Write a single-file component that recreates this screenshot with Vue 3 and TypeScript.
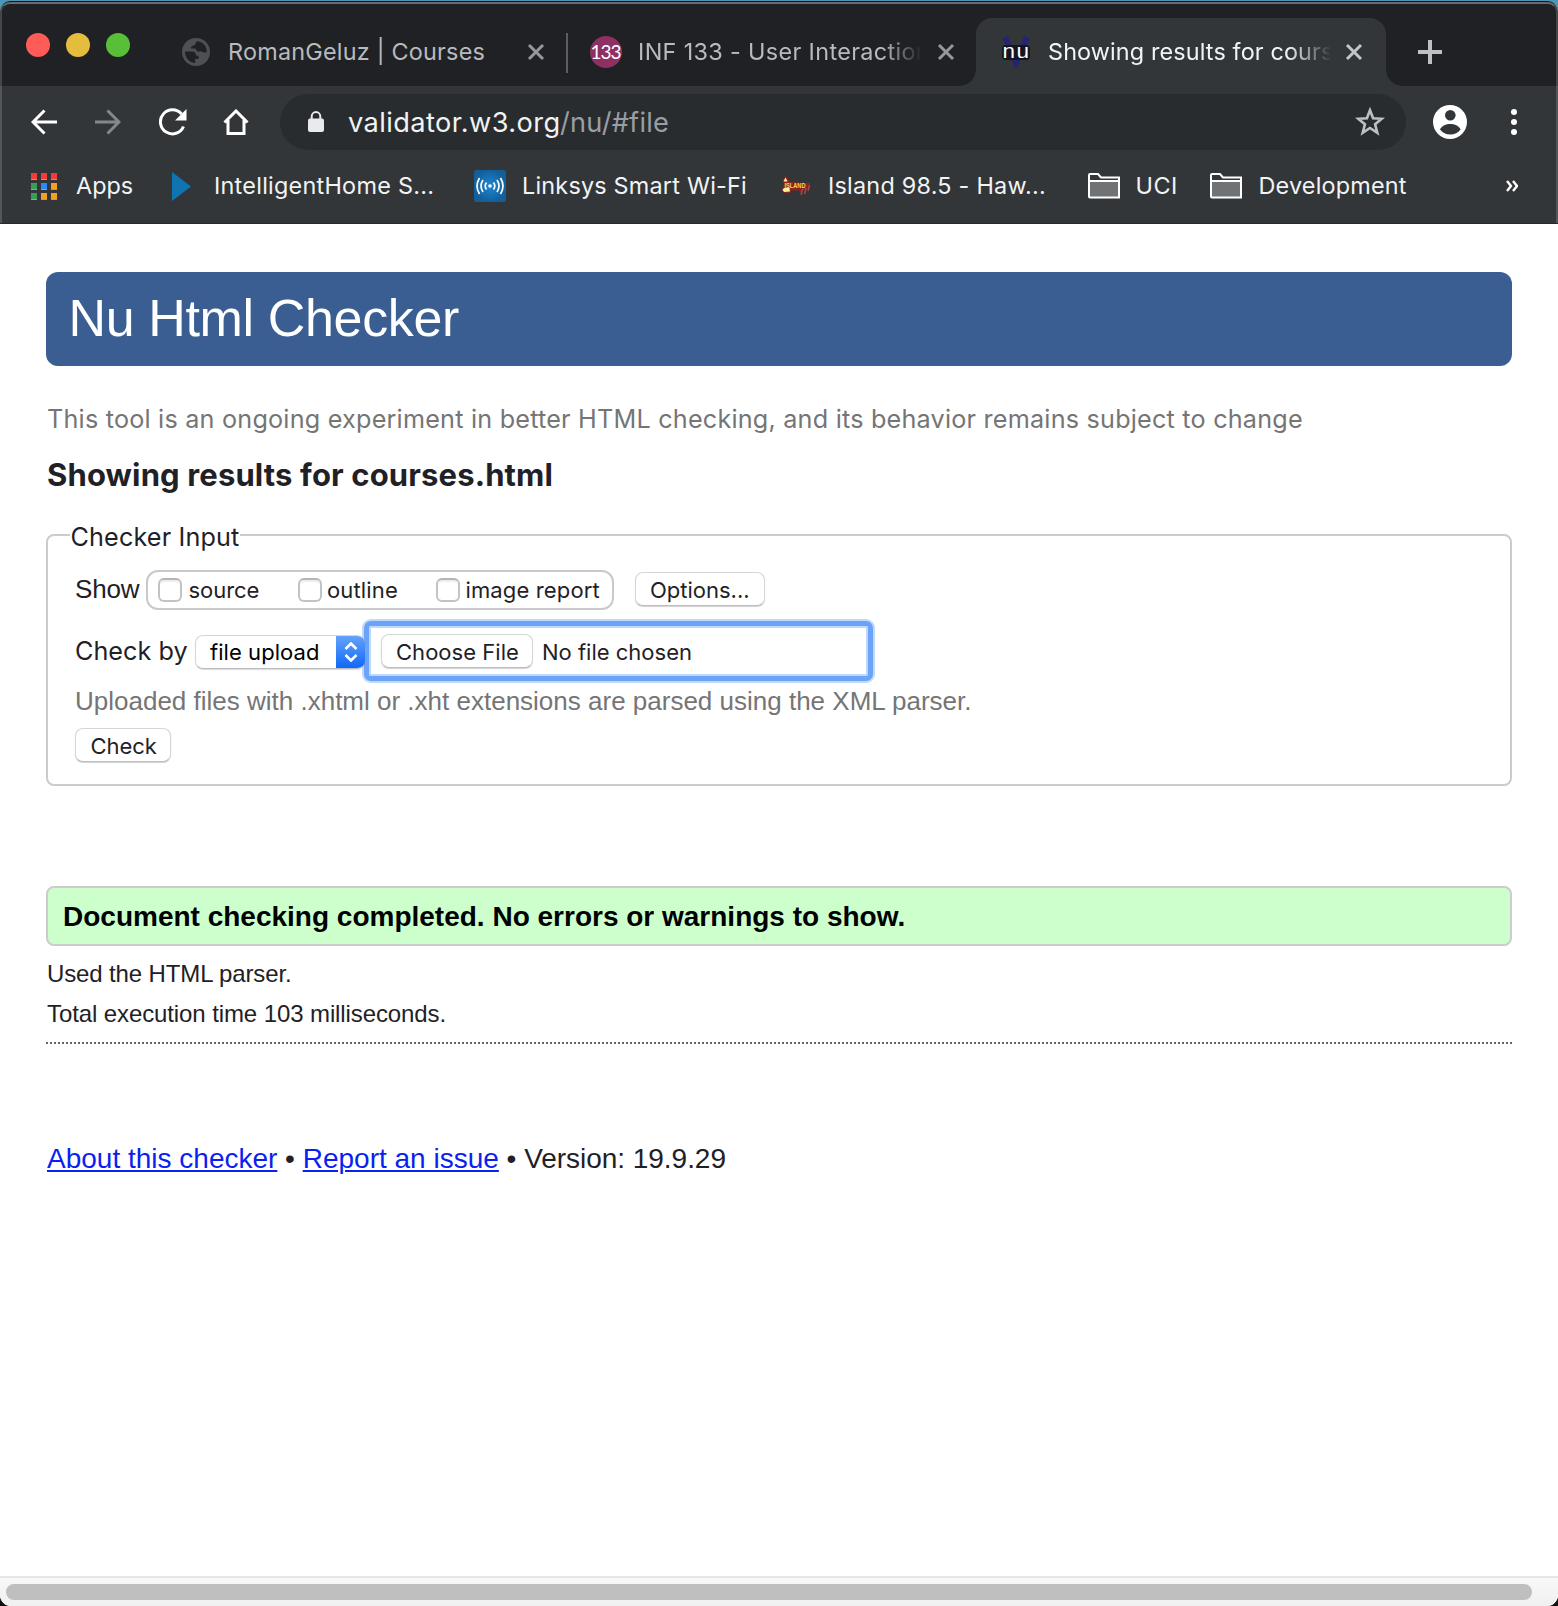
<script setup lang="ts">
import { ref } from 'vue'

interface Choice {
  id: string
  label: string
}

const choices: Choice[] = [
  { id: 'source', label: 'source' },
  { id: 'outline', label: 'outline' },
  { id: 'report', label: 'image report' },
]
const shown = ref<string[]>([])
const appColors: string[] = [
  '#f33b37', '#f33b37', '#f33b37',
  '#3a9d57', '#2a8bf2', '#f3a024',
  '#3a9d57', '#f3a024', '#f3a024',
]
</script>

<template>
  <div class="screen">
    <div class="window">
      <header class="chrome">
        <div class="tabs">
          <div class="lights"><i class="red"></i><i class="yellow"></i><i class="green"></i></div>
          <div class="tab first">
            <svg class="globe" viewBox="0 0 28 28">
              <circle cx="14" cy="14" r="14" fill="#4d5156" />
              <path fill="#202124" d="M3 13.6h6.6c3.200 0 4.400 1.200 4.400 3.400v.8h2.600v3.200h-3.400v4C7.500 25 3 20.400 3 13.600zM14.800 3.200C13.500 4.600 14 7 11.400 7.600c-1.800.5-2.600 1.200-2.600 3h3.400c2.300 0 2 2.700 3.800 3.100 1.300.3 2-.9 3.400-.2 1.600.8 2.900 1.300 5.400 1C25.400 8.600 21 3.200 14.800 3.200z" />
            </svg>
            <span class="title t1">RomanGeluz | Courses</span>
            <svg class="close" viewBox="0 0 18 18"><path d="M2 2l14 14M16 2L2 16" /></svg>
          </div>
          <i class="divider"></i>
          <div class="tab second">
            <span class="badge">133</span>
            <span class="title t2">INF 133 - User Interaction</span>
            <svg class="close" viewBox="0 0 18 18"><path d="M2 2l14 14M16 2L2 16" /></svg>
          </div>
          <div class="tab active">
            <svg class="nu" viewBox="0 0 32 32">
              <path d="M5 1l11 26L27 1" fill="none" stroke="#25256f" stroke-width="6" />
              <rect x="2" y="9" width="28" height="15" rx="4" fill="#111116" opacity=".85" />
              <text x="2.500" y="21.500" textLength="12.500" lengthAdjust="spacingAndGlyphs">n</text>
              <text x="16.500" y="21.500" textLength="12.500" lengthAdjust="spacingAndGlyphs">u</text>
            </svg>
            <span class="title t3">Showing results for courses.html</span>
            <svg class="close" viewBox="0 0 18 18"><path d="M2 2l14 14M16 2L2 16" /></svg>
          </div>
          <svg class="plus" viewBox="0 0 24 24"><path d="M12 0v24M0 12h24" /></svg>
        </div>

        <div class="toolbar">
          <svg class="nav" viewBox="0 0 26 26"><path d="M26 13H2M13.500 1.500L2 13l11.500 11.500" /></svg>
          <svg class="nav off" viewBox="0 0 26 26"><path d="M0 13h24M12.500 1.500L24 13 12.500 24.500" /></svg>
          <svg class="nav reload" viewBox="0 0 28 28">
            <path d="M24.500 18.500A12 12 0 1 1 22.500 6" />
            <path class="solid" d="M27.500 1v11.500H16z" />
          </svg>
          <svg class="nav home" viewBox="0 0 26 26"><path d="M1.500 13.500L13 2l11.500 11.500M5 11v13.500h16V11" /></svg>
          <div class="omnibox">
            <svg class="lock" viewBox="0 0 16 22">
              <rect y="7.500" width="16" height="13.500" rx="2" fill="#e8eaed" />
              <path d="M3.700 8V5.400a4.300 4.300 0 0 1 8.600 0V8" fill="none" stroke="#e8eaed" stroke-width="2" />
            </svg>
            <span class="host">validator.w3.org</span><span class="path">/nu/#file</span>
            <svg class="star" viewBox="0 0 30 30"><path d="M15 3.200l3.100 8.100 8.700.5-6.700 5.500 2.200 8.500L15 21l-7.300 4.800 2.200-8.500-6.700-5.500 8.700-.5z" /></svg>
          </div>
          <svg class="avatar" viewBox="0 0 34 34">
            <circle cx="17" cy="17" r="17" fill="#fff" />
            <circle cx="17.300" cy="10.300" r="5.300" fill="#323639" />
            <path d="M7 24.500C9 20.500 13 19 17.300 19s8.300 1.500 10.300 5.500C25 28 21.500 29.500 17.300 29.500S9.600 28 7 24.500z" fill="#323639" />
          </svg>
          <svg class="dots" viewBox="0 0 6 26"><circle cx="3" cy="3" r="3" /><circle cx="3" cy="13" r="3" /><circle cx="3" cy="23" r="3" /></svg>
        </div>

        <nav class="bookmarks">
          <div class="apps"><i v-for="(c, i) in appColors" :key="i" :style="{ background: c }"></i></div>
          <span class="b1">Apps</span>
          <svg class="play" viewBox="0 0 19 29"><path d="M0 0l19 14.500L0 29z" fill="#0f75b0" /></svg>
          <span class="b2">IntelligentHome S...</span>
          <svg class="wifi" viewBox="0 0 32 32">
            <defs><radialGradient id="wifiFill"><stop offset="0" stop-color="#1e88d2" /><stop offset="1" stop-color="#125f9b" /></radialGradient></defs>
            <rect width="32" height="32" rx="3" fill="url(#wifiFill)" />
            <circle cx="16" cy="16" r="1.800" fill="#fff" />
            <path d="M12.500 12.500q-2.600 3.500 0 7M19.500 12.500q2.600 3.500 0 7M9 10q-4 6 0 12M23 10q4 6 0 12M5.500 8q-5 8 0 16M26.500 8q5 8 0 16" fill="none" stroke="#fff" stroke-width="1.700" />
          </svg>
          <span class="b3">Linksys Smart Wi-Fi</span>
          <svg class="island" viewBox="0 0 30 20">
            <path d="M5 0L1.500 4.500l2 3L1 14l1 2.500 7 1 1-3 8 0 1 1.500 9-4 1-5-5 0-15-1z" fill="#8f2322" />
            <path d="M4.500 1.500L2.500 5.500h4zM1.500 13.500l2-1.500h5l.5 3.500-6 .5z" fill="#fff29a" />
            <path d="M20 19l1.500-6M23.500 18l1.500-6M27 15l1.500-6" stroke="#a8474a" stroke-width="1.500" />
            <text x="3.500" y="11.500" textLength="21" lengthAdjust="spacingAndGlyphs">ISLAND</text>
          </svg>
          <span class="b4">Island 98.5 - Haw...</span>
          <svg class="folder" viewBox="0 0 32 26"><rect x="2" y="9" width="28" height="15" fill="#6f7376" /><path d="M1 24V2q0-1 1-1h8l3 3.500h18V24.500H2q-1 0-1-1M1 8h30" /></svg>
          <span class="b5">UCI</span>
          <svg class="folder" viewBox="0 0 32 26"><rect x="2" y="9" width="28" height="15" fill="#6f7376" /><path d="M1 24V2q0-1 1-1h8l3 3.500h18V24.500H2q-1 0-1-1M1 8h30" /></svg>
          <span class="b6">Development</span>
          <svg class="more" viewBox="0 0 12 12"><path d="M1 1l4 5-4 5M7 1l4 5-4 5" /></svg>
        </nav>
      </header>

      <main class="page">
        <h1>Nu Html Checker</h1>
        <p class="intro">This tool is an ongoing experiment in better HTML checking, and its behavior remains subject to change</p>
        <h2>Showing results for courses.html</h2>

        <fieldset class="panel">
          <legend>Checker Input</legend>
          <div class="row show">
            <span class="show-label">Show</span>
            <div class="choices">
              <label v-for="c in choices" :key="c.id" :class="c.id">
                <input v-model="shown" type="checkbox" :value="c.id" />
                <span>{{ c.label }}</span>
              </label>
            </div>
            <button type="button" class="btn options">Options...</button>
          </div>
          <div class="row by">
            <span class="by-label">Check by</span>
            <div class="select">
              <span>file upload</span>
              <div class="knob"><svg viewBox="0 0 14 20"><path d="M1.500 7L7 1.500 12.500 7M1.500 13L7 18.500l5.500-5.500" /></svg></div>
            </div>
            <div class="file">
              <button type="button" class="btn choose">Choose File</button>
              <span>No file chosen</span>
            </div>
          </div>
          <p class="help">Uploaded files with .xhtml or .xht extensions are parsed using the XML parser.</p>
          <button type="button" class="btn check">Check</button>
        </fieldset>

        <p class="success">Document checking completed. No errors or warnings to show.</p>
        <p class="info used">Used the HTML parser.</p>
        <p class="info time">Total execution time 103 milliseconds.</p>
        <hr />
        <footer><a href="#about">About this checker</a> • <a href="#issue">Report an issue</a> • <span class="version">Version: 19.9.29</span></footer>
      </main>
      <div class="scrollbar"><i></i></div>
    </div>
  </div>
</template>

<style>
body { margin: 0; overflow: hidden; }
</style>

<style scoped>
* { box-sizing: border-box; }
i { display: block; font-style: normal; }
svg { display: block; flex: none; }
span { white-space: nowrap; }
.screen {
  width: 1558px; height: 1606px; overflow: hidden;
  font-family: Inter, "Liberation Sans", sans-serif;
  background: linear-gradient(#4a98b8 0 14px, #111 14px);
}
.window {
  position: relative; height: 1605px; margin-top: 1px; overflow: hidden;
  display: flex; flex-direction: column;
  border-top: 1px solid #111; border-radius: 11px; background: #fff;
}
.chrome {
  position: relative; flex: none; height: 222px; overflow: hidden;
  background: #323639; border-radius: 10px 10px 0 0; border-bottom: 1px solid #26292b;
}
.chrome::after {
  content: ""; position: absolute; inset: 0 0 -3px; pointer-events: none;
  border: 2px solid rgba(255, 255, 255, .17); border-top-color: #6b6d6c; border-radius: 10px 10px 0 0;
}

/* tab strip */
.tabs { display: flex; height: 84px; padding-top: 16px; background: #202124; }
.lights { display: flex; gap: 16px; margin: 15px 0 0 26px; height: 24px; }
.lights i { width: 24px; height: 24px; border-radius: 50%; }
.red { background: #ff5b57; }
.yellow { background: #e4bd3c; }
.green { background: #58c038; }
.tab { display: flex; align-items: center; height: 68px; flex: none; color: #b8babe; font-size: 23.4px; line-height: 68px; }
.first { margin-left: 52px; }
.globe { width: 28px; height: 28px; }
.title { overflow: hidden; flex: none; }
.t1 { width: 300px; margin-left: 18px; letter-spacing: .219px; }
.close { width: 18px; height: 18px; fill: none; stroke: #96989b; stroke-width: 3; }
.first .close { margin-left: -1px; }
.divider { width: 2px; height: 40px; margin: 15px 0 0 21px; background: #5b5d60; }
.second { margin-left: 22px; }
.badge {
  width: 32px; height: 32px; border-radius: 50%; background: #8e3162; color: #fff;
  font: 19px/32px Lato, sans-serif; letter-spacing: -1px; text-align: center; text-indent: -1px;
}
.t2 {
  width: 284px; margin-left: 16px; letter-spacing: .347px;
  mask-image: linear-gradient(90deg, #000 245px, transparent 284px);
}
.second .close { margin-left: 15px; }
.active { position: relative; width: 410px; margin-left: 21px; background: #323639; border-radius: 16px 16px 0 0; color: #f1f3f4; }
.active::before, .active::after { content: ""; position: absolute; bottom: 0; width: 16px; height: 16px; }
.active::before { left: -16px; background: radial-gradient(circle at 0 0, transparent 15.500px, #323639 16px); }
.active::after { right: -16px; background: radial-gradient(circle at 100% 0, transparent 15.500px, #323639 16px); }
.nu { width: 32px; height: 32px; margin-left: 24px; }
.nu text { font: 20px "Liberation Sans", sans-serif; fill: #fff; }
.t3 {
  width: 282px; margin-left: 16px; letter-spacing: .123px;
  mask-image: linear-gradient(90deg, #000 240px, transparent 284px);
}
.active .close { margin-left: 15px; stroke: #c3c5c7; }
.plus { width: 24px; height: 24px; margin: 22px 0 0 32px; stroke: #bdc1c6; stroke-width: 4; }

/* address row */
.toolbar { display: flex; align-items: center; height: 72px; padding-left: 31px; }
.nav { width: 26px; height: 26px; fill: none; stroke: #fff; stroke-width: 3; }
.off { margin-left: 38px; stroke: #85888a; }
.reload { width: 28px; height: 28px; margin-left: 38px; }
.reload .solid { fill: #fff; stroke: none; }
.home { margin-left: 36px; }
.omnibox { display: flex; align-items: center; width: 1126px; height: 56px; margin-left: 31px; border-radius: 28px; background: #282c2f; font-size: 27.2px; line-height: 56px; }
.omnibox span { padding-top: 2px; }
.lock { width: 16px; height: 22px; margin-left: 28px; }
.host { width: 212px; margin-left: 24px; color: #f1f3f4; letter-spacing: .42px; }
.path { color: #9a9ea4; letter-spacing: .217px; }
.star { width: 30px; height: 30px; margin: 0 21px 0 auto; fill: none; stroke: #bdc1c6; stroke-width: 2.600; }
.avatar { width: 34px; height: 34px; margin-left: 27px; }
.dots { width: 6px; height: 26px; margin-left: 44px; fill: #fff; }

/* bookmarks */
.bookmarks { display: flex; align-items: center; height: 56px; padding: 0 0 0 31px; color: #f1f3f4; font-size: 23.4px; line-height: 56px; }
.bookmarks span { flex: none; }
.apps { display: grid; grid-template-columns: repeat(3, 6px); gap: 3px 4px; flex: none; }
.apps i { height: 7px; border-bottom: 1px solid #9b9d9e; }
.b1 { width: 96px; margin-left: 19px; letter-spacing: 0; }
.play { width: 19px; height: 29px; }
.b2 { width: 260px; margin-left: 23px; letter-spacing: .26px; }
.wifi { width: 32px; height: 32px; }
.b3 { width: 259px; margin-left: 16px; letter-spacing: .207px; }
.island { width: 30px; height: 20px; }
.island text { font: bold 6.500px "Liberation Sans", sans-serif; fill: #f8dc43; }
.b4 { width: 260px; margin-left: 17px; letter-spacing: .234px; }
.folder { width: 32px; height: 26px; margin-bottom: 1px; fill: none; }
.folder path { stroke: #fff; stroke-width: 2; }
.b5 { width: 74.500px; margin-left: 15.500px; letter-spacing: .5px; }
.b6 { width: 247px; margin-left: 16.500px; letter-spacing: .2px; }
.more { width: 12px; height: 12px; margin-bottom: 1px; fill: none; stroke: #fff; stroke-width: 2.400; }

/* document */
.page { flex: 1; padding: 48px 46px 0; color: #1f2126; }
h1, h2, p { margin: 0; white-space: nowrap; }
h1 {
  height: 94px; padding-left: 22.500px; border-radius: 12px; background: #3a5e92; color: #fff;
  font: 400 52px/92px "Liberation Sans", Arial, sans-serif; letter-spacing: -.361px;
}
.intro { margin: 33px 0 0 1px; color: #757575; font-size: 25.2px; line-height: 40px; letter-spacing: .211px; }
h2 { margin: 16px 0 0 1px; font-size: 31px; line-height: 40px; letter-spacing: .14px; }
.panel { height: 266px; margin: 25px 0 0; padding: 0 0 0 27px; border: 2px solid #ccc; border-radius: 8px; }
legend { height: 30px; margin-left: -5px; padding: 0 1px 0 .5px; font-size: 25.2px; line-height: 34px; letter-spacing: .139px; }
.row { display: flex; align-items: center; }
.show { height: 40px; margin-top: 20px; }
.show-label { width: 71px; padding-bottom: 2px; font: 26px/38px "Liberation Sans", Arial, sans-serif; letter-spacing: -.2px; }
.choices { display: flex; align-items: center; width: 468px; height: 40px; padding-left: 10px; border: 2px solid #c9c9c9; border-radius: 12px; font-size: 22px; }
label { display: flex; align-items: center; flex: none; }
input {
  appearance: none; width: 24px; height: 24px; margin: 0; border: 2px solid #c3c3c3; border-top-color: #b5b5b5;
  border-radius: 6px; background: #fff; box-shadow: inset 0 2px 1px #eee;
}
.source { width: 140px; }
.source span { margin-left: 6.500px; letter-spacing: -.06px; }
.outline { width: 138px; }
.outline span { margin-left: 5px; letter-spacing: .158px; }
.report span { margin-left: 5.500px; letter-spacing: .137px; }
.btn {
  display: block; flex: none; height: 34px; padding: 2px 0 0 14px; border: 1px solid #d6d6d6; border-bottom-color: #bdbdbd;
  border-radius: 8px; background: #fff; box-shadow: 0 1px 1px rgba(0, 0, 0, .18);
  color: #1f2126; font: 22px/30px Inter, sans-serif; text-align: left;
}
.options { width: 130px; margin: -2px 0 0 21px; }
.by { height: 64px; margin-top: 9px; }
.by-label { width: 120px; font-size: 25.2px; letter-spacing: .04px; }
.select {
  display: flex; flex: none; width: 170px; height: 34px; margin-top: 2px; overflow: hidden; position: relative; z-index: 1;
  border: 1px solid #d6d6d6; border-right: 0; border-bottom-color: #bdbdbd; border-radius: 8px; box-shadow: 0 1px 1px rgba(0, 0, 0, .15);
  color: #000; font-size: 22px; line-height: 32px;
}
.select span { width: 126px; margin-left: 14px; letter-spacing: .062px; }
.knob { width: 29px; height: 34px; margin-top: -1px; padding: 7px 0 0 7.500px; background: linear-gradient(#66a4f8, #0d66fb); }
.knob svg { width: 14px; height: 20px; fill: none; stroke: #fff; stroke-width: 2.600; }
.file {
  display: flex; align-items: center; width: 509px; height: 60px; margin-left: -1px; padding-left: 10px;
  border: 5px solid #6ba3f7; border-radius: 7px; box-shadow: 0 0 0 2px #bfd8fb, inset 0 0 0 2px #bfd8fb;
  position: relative; background: #fff; font-size: 22px;
}
.choose { width: 152px; margin-left: 2px; letter-spacing: .027px; }
.file span { margin: 2px 0 0 9px; }
.help { color: #757575; font: 26px/36px "Liberation Sans", Arial, sans-serif; }
.check { width: 96px; margin-top: 9px; padding-left: 14.500px; letter-spacing: -.08px; }
.success {
  height: 60px; margin-top: 100px; padding-left: 15px; border: 2px solid #ccc; border-radius: 8px; background: #cfc; color: #000;
  font: 700 28px/58px "Liberation Sans", Arial, sans-serif;
}
.info { padding-left: 1px; font: 24px/40px "Liberation Sans", Arial, sans-serif; letter-spacing: -.1px; }
.used { margin-top: 8px; letter-spacing: -.13px; }
hr { height: 2px; margin: 8px 0 0; border: 0; background: repeating-linear-gradient(90deg, #666 0 2px, transparent 2px 4px); }
footer { margin: 97px 0 0 1px; font: 28px/36px "Liberation Sans", Arial, sans-serif; white-space: nowrap; }
a { color: #0a1ff0; text-decoration: underline 2px; text-underline-offset: 2px; }
.version { letter-spacing: -.04px; }
.scrollbar { flex: none; height: 30px; padding: 6px 0 0 6px; border-top: 2px solid #e5e5e5; background: linear-gradient(#f8f8f8, #f0f0f0); }
.scrollbar i { width: 1526px; height: 16px; border-radius: 8px; background: #bfbfbf; }
</style>
